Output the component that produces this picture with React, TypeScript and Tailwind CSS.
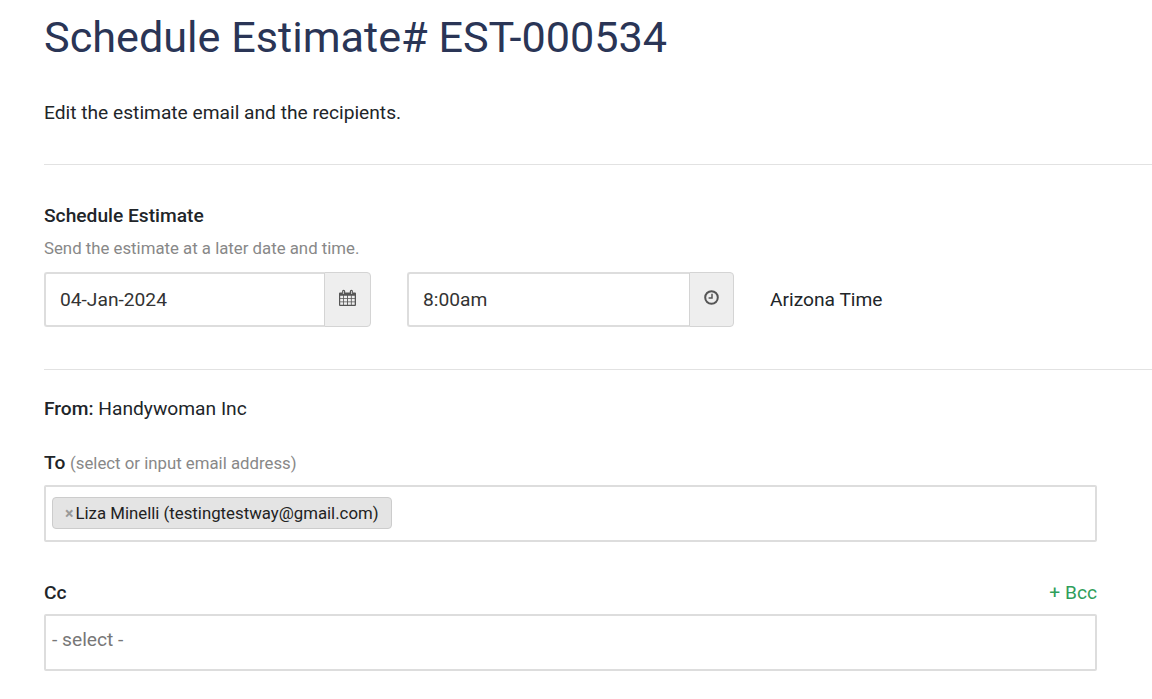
import React from 'react';

const CalendarIcon = () => (
  <svg width="17" height="18" viewBox="0 0 17 18" className="text-[#555] mb-1">
    <path fill="currentColor" d="M1 3.500h2V2.300a1.600 1.600 0 0 1 3.200 0v1.200h4.600V2.300a1.600 1.600 0 0 1 3.200 0v1.200h2a1 1 0 0 1 1 1V16a1 1 0 0 1-1 1H1a1 1 0 0 1-1-1V4.500a1 1 0 0 1 1-1z" />
    <path fill="#eee" d="M3.900 2h.8v3.100h-.8zM12.300 2h.8v3.100h-.8z" />
    <path fill="#eee" d="M1.200 6.800h3v2.400h-3zM5 6.800h3v2.400H5zM8.900 6.800h3v2.400h-3zM12.700 6.800h3v2.400h-3zM1.200 10h3v2.400h-3zM5 10h3v2.400H5zM8.900 10h3v2.400h-3zM12.700 10h3v2.400h-3zM1.200 13.300h3v2.500h-3zM5 13.300h3v2.500H5zM8.900 13.300h3v2.500h-3zM12.700 13.300h3v2.500h-3z" />
  </svg>
);

const ClockIcon = () => (
  <svg width="15" height="15" viewBox="0 0 15 15" fill="none" stroke="#555" className="mb-1">
    <circle cx="7.500" cy="7.500" r="6.300" strokeWidth="2" />
    <path d="M8 3.800v4.200H4.600" strokeWidth="1.500" />
  </svg>
);

const Divider = () => <div className="h-px bg-[#e2e2e2] ml-11" />;

export default function App() {
  return (
    <div className="w-[1152px] h-[699px] overflow-hidden bg-white text-[#212529] font-['Roboto',sans-serif]">
      <h1 className="ml-11 mt-[10px] h-[56px] text-[43.2px] leading-[56px] font-normal text-[#2a3556]">
        Schedule Estimate# EST-000534
      </h1>
      <p className="ml-11 mt-[34px] text-[19.2px] leading-[26px]">Edit the estimate email and the recipients.</p>
      <div className="mt-[38px]">
        <Divider />
      </div>

      <div className="ml-11 mt-[38px] text-[19.2px] leading-[26px] font-medium">Schedule Estimate</div>
      <div className="ml-11 mt-[7px] text-[16.8px] leading-[24px] text-[#888]">Send the estimate at a later date and time.</div>

      <div className="ml-11 mt-[12px] flex items-center h-[55px]">
        <div className="flex w-[327px] h-[55px]">
          <div className="flex-1 flex items-center pl-[14px] pt-[1px] text-[19.2px] text-[#333] border-2 border-r-0 border-[#ddd] rounded-l-[3px]">
            04-Jan-2024
          </div>
          <div className="w-[47px] flex items-center justify-center bg-[#eee] border border-[#d4d4d4] rounded-r-[4px]">
            <CalendarIcon />
          </div>
        </div>
        <div className="flex w-[327px] h-[55px] ml-[36px]">
          <div className="flex-1 flex items-center pl-[14px] pt-[1px] text-[19.2px] text-[#333] border-2 border-r-0 border-[#ddd] rounded-l-[3px]">
            8:00am
          </div>
          <div className="w-[45px] flex items-center justify-center bg-[#eee] border border-[#d4d4d4] rounded-r-[4px]">
            <ClockIcon />
          </div>
        </div>
        <span className="ml-[36px] pt-[1px] text-[19.2px]">Arizona Time</span>
      </div>

      <div className="mt-[42px]">
        <Divider />
      </div>

      <div className="ml-11 mt-[26px] text-[19.2px] leading-[26px]">
        <span className="font-medium">From:</span> Handywoman Inc
      </div>

      <div className="ml-11 mt-[28px] text-[19.2px] leading-[26px]">
        <span className="font-medium">To</span>{' '}
        <span className="text-[16.8px] text-[#888]">(select or input email address)</span>
      </div>
      <div className="ml-11 mt-[9px] w-[1053px] h-[57px] flex items-center pl-[6px] pb-[2px] border-2 border-[#ddd] rounded-[2px]">
        <span className="flex items-center h-[32px] pl-[12px] pr-[12px] pt-[2px] bg-[#e4e4e4] border border-[#ccc] rounded-[4px] text-[16.8px] text-[#222]">
          <span className="text-[#999] font-bold text-[16px] mr-[2px]">×</span>
          Liza Minelli (testingtestway@gmail.com)
        </span>
      </div>

      <div className="ml-11 mt-[38px] w-[1053px] flex justify-between text-[19.2px] leading-[26px]">
        <span className="font-medium">Cc</span>
        <span className="text-[#2f9e5b]">+ Bcc</span>
      </div>
      <div className="ml-11 mt-[8px] w-[1053px] h-[57px] flex items-center pl-[6px] pb-[4px] border-2 border-[#ddd] rounded-[2px] text-[19.2px] text-[#777]">
        - select -
      </div>
    </div>
  );
}
